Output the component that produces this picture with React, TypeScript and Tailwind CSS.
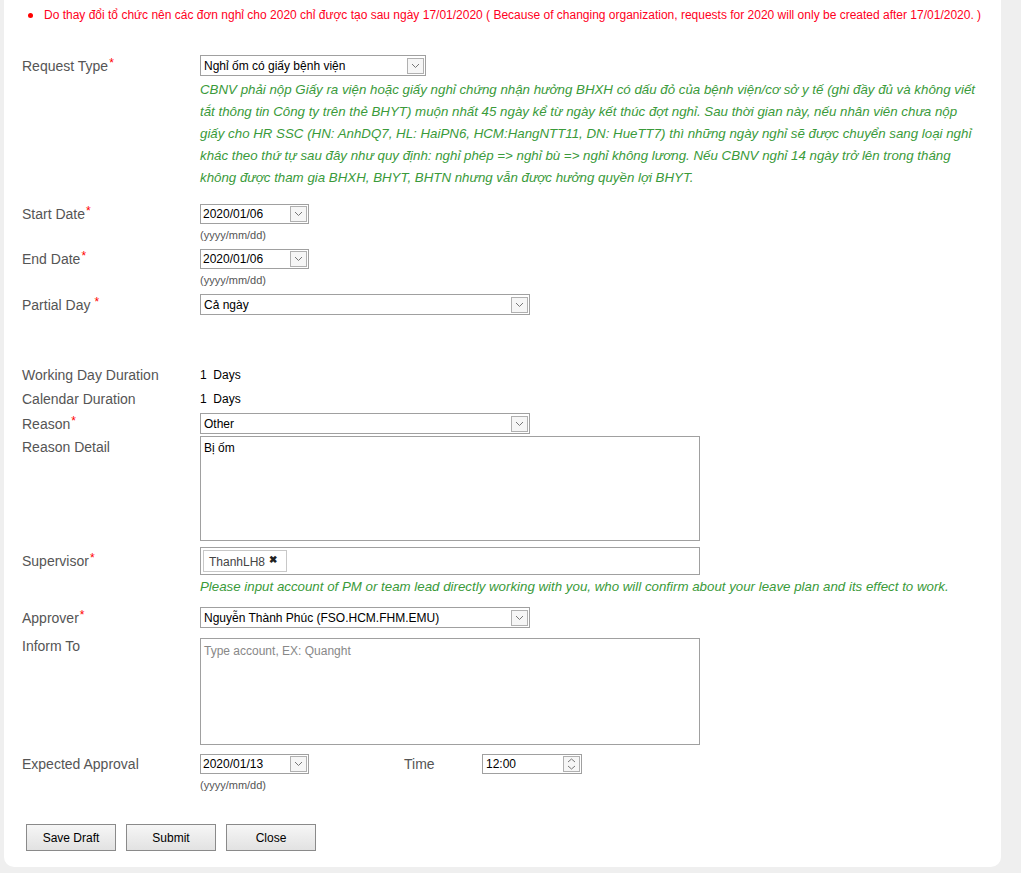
import React from 'react';

const label = "text-[14px] text-[#555] leading-[16px]";
const val = "text-[12px] text-black leading-[14px]";

const noteLines = [
  'CBNV phải nộp Giấy ra viện hoặc giấy nghỉ chứng nhận hưởng BHXH có dấu đỏ của bệnh viện/cơ sở y tế (ghi đầy đủ và không viết',
  'tắt thông tin Công ty trên thẻ BHYT) muộn nhất 45 ngày kể từ ngày kết thúc đợt nghỉ. Sau thời gian này, nếu nhân viên chưa nộp',
  'giấy cho HR SSC (HN: AnhDQ7, HL: HaiPN6, HCM:HangNTT11, DN: HueTT7) thì những ngày nghỉ sẽ được chuyển sang loại nghỉ',
  'khác theo thứ tự sau đây như quy định: nghỉ phép => nghỉ bù => nghỉ không lương. Nếu CBNV nghỉ 14 ngày trở lên trong tháng',
  'không được tham gia BHXH, BHYT, BHTN nhưng vẫn được hưởng quyền lợi BHYT.',
];

function Star({ space }: { space?: boolean }) {
  return <span className={`text-[#ff0000] text-[12px] align-top relative -top-[3px] ${space ? 'ml-[4px]' : 'ml-[1px]'}`}>*</span>;
}

function Chevron() {
  return (
    <span className="w-[17px] h-[16px] border border-[#b0b0b0] bg-[#f6f6f6] flex items-center justify-center">
      <svg width="9" height="6" viewBox="0 0 9 6">
        <path d="M1 1 L4.5 4.5 L8 1" fill="none" stroke="#777" strokeWidth="1" />
      </svg>
    </span>
  );
}

function Select({ value, width }: { value: string; width: string }) {
  return (
    <div className={`${width} h-[21px] border border-[#a0a0a0] bg-white flex items-center justify-between pl-[3px] pr-[1px]`}>
      <span className={val}>{value}</span>
      <Chevron />
    </div>
  );
}

function DateBox({ value }: { value: string }) {
  return (
    <div>
      <div className="w-[109px] h-[20px] border border-[#a0a0a0] bg-white flex items-center justify-between pl-[2px] pr-[1px]">
        <span className={val}>{value}</span>
        <Chevron />
      </div>
      <div className="mt-[4px] h-[14px] text-[11px] leading-[14px] text-[#555]">(yyyy/mm/dd)</div>
    </div>
  );
}

function Row({ children, className = '' }: { children: React.ReactNode; className?: string }) {
  return <div className={`flex ${className}`}>{children}</div>;
}

export default function App() {
  return (
    <div className="min-h-[873px] w-full bg-[#efefef] pl-[4px] pr-[20px]" style={{ fontFamily: '"Liberation Sans", Arial, sans-serif' }}>
      <div className="bg-white rounded-b-[10px] pl-[18px] pb-[16px]">
        {/* notice */}
        <div className="pt-[7px] h-[23px] flex items-center">
          <span className="ml-[6px] w-[5px] h-[5px] rounded-full bg-[#ff0000]" />
          <span className="ml-[11px] text-[12px] leading-[16px] text-[#ff0022]">
            Do thay đổi tổ chức nên các đơn nghỉ cho 2020 chỉ được tạo sau ngày 17/01/2020 ( Because of changing organization, requests for 2020 will only be created after 17/01/2020. )
          </span>
        </div>

        <Row className="mt-[32px] items-center">
          <div className={`w-[178px] ${label}`}>Request Type<Star /></div>
          <Select value="Nghỉ ốm có giấy bệnh viện" width="w-[226px]" />
        </Row>
        <div className="ml-[178px] mt-[3px] text-[13.3px] leading-[22px] italic text-[#3a9a3a] whitespace-nowrap">
          {noteLines.map((l) => (
            <div key={l}>{l}</div>
          ))}
        </div>

        <Row className="mt-[15px]">
          <div className={`w-[178px] ${label} pt-[2px]`}>Start Date<Star /></div>
          <DateBox value="2020/01/06" />
        </Row>
        <Row className="mt-[7px]">
          <div className={`w-[178px] ${label} pt-[2px]`}>End Date<Star /></div>
          <DateBox value="2020/01/06" />
        </Row>
        <Row className="mt-[7px] items-center">
          <div className={`w-[178px] ${label}`}>Partial Day<Star space /></div>
          <Select value="Cả ngày" width="w-[330px]" />
        </Row>

        <Row className="mt-[50px] h-[20px] items-center">
          <div className={`w-[178px] ${label}`}>Working Day Duration</div>
          <div className={val}>1&nbsp; Days</div>
        </Row>
        <Row className="mt-[4px] h-[20px] items-center">
          <div className={`w-[178px] ${label}`}>Calendar Duration</div>
          <div className={`${val} text-[#555]`}>1&nbsp; Days</div>
        </Row>
        <Row className="mt-[4px] items-center">
          <div className={`w-[178px] ${label}`}>Reason<Star /></div>
          <Select value="Other" width="w-[330px]" />
        </Row>
        <Row className="mt-[2px]">
          <div className={`w-[178px] ${label} pt-[3px]`}>Reason Detail</div>
          <div className={`w-[500px] h-[105px] border border-[#a0a0a0] bg-white px-[3px] py-[4px] ${val}`}>Bị ốm</div>
        </Row>

        <Row className="mt-[6px] items-center">
          <div className={`w-[178px] ${label}`}>Supervisor<Star /></div>
          <div className="w-[500px] h-[28px] border border-[#a0a0a0] bg-white p-[2px] flex">
            <div className="h-[22px] w-[84px] border border-[#c8c8c8] flex items-start pl-[5px] pt-[4px]">
              <span className="text-[12px] leading-[14px] text-[#444]">ThanhLH8</span>
              <span className="ml-[4px] -mt-[3px] text-[10px] font-bold text-[#222]">✖</span>
            </div>
          </div>
        </Row>
        <div className="ml-[178px] mt-[4px] h-[16px] text-[13.3px] leading-[16px] italic text-[#3a9a3a] whitespace-nowrap">
          Please input account of PM or team lead directly working with you, who will confirm about your leave plan and its effect to work.
        </div>

        <Row className="mt-[12px] items-center">
          <div className={`w-[178px] ${label}`}>Approver<Star /></div>
          <Select value="Nguyễn Thành Phúc (FSO.HCM.FHM.EMU)" width="w-[330px]" />
        </Row>
        <Row className="mt-[10px]">
          <div className={`w-[178px] ${label}`}>Inform To</div>
          <div className="w-[500px] h-[107px] border border-[#a0a0a0] bg-white px-[3px] py-[5px] text-[12px] leading-[14px] text-[#888]">
            Type account, EX: Quanght
          </div>
        </Row>

        <Row className="mt-[9px]">
          <div className={`w-[178px] ${label} pt-[2px]`}>Expected Approval</div>
          <DateBox value="2020/01/13" />
          <div className={`ml-[95px] w-[78px] ${label} pt-[2px]`}>Time</div>
          <div className="w-[100px] h-[20px] border border-[#a0a0a0] bg-white flex items-center justify-between pl-[3px] pr-[1px]">
            <span className={val}>12:00</span>
            <span className="w-[17px] h-[16px] border border-[#b0b0b0] bg-[#f6f6f6] flex flex-col items-center justify-center gap-[2px]">
              <svg width="9" height="5" viewBox="0 0 9 5"><path d="M1 4 L4.5 1 L8 4" fill="none" stroke="#777" /></svg>
              <svg width="9" height="5" viewBox="0 0 9 5"><path d="M1 1 L4.5 4 L8 1" fill="none" stroke="#777" /></svg>
            </span>
          </div>
        </Row>

        <div className="mt-[32px] flex gap-[10px] pl-[4px]">
          {['Save Draft', 'Submit', 'Close'].map((b) => (
            <button key={b} className="w-[90px] h-[27px] border border-[#8a8a8a] bg-gradient-to-b from-[#f6f6f6] to-[#e2e2e2] text-[12px] text-black">
              {b}
            </button>
          ))}
        </div>
      </div>
    </div>
  );
}
